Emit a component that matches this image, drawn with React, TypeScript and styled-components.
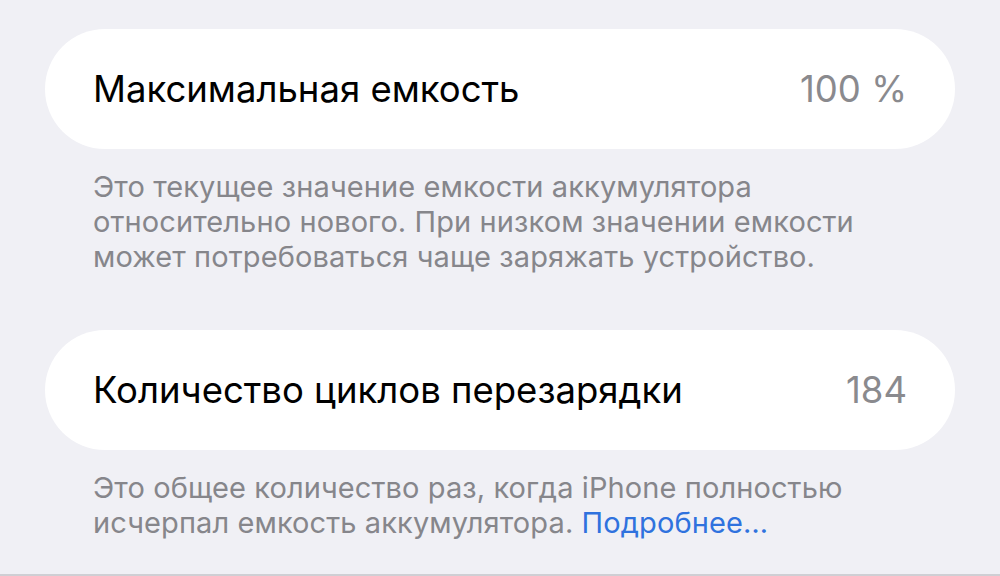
import React from 'react'
import styled, { createGlobalStyle } from 'styled-components'

const GlobalStyle = createGlobalStyle`
  html, body {
    margin: 0;
    padding: 0;
    background: #f0f0f5;
  }
  body {
    font-family: Inter, "Noto Sans", "Liberation Sans", sans-serif;
    -webkit-font-smoothing: antialiased;
  }
`

const Page = styled.div`
  width: 1000px;
  height: 576px;
  box-sizing: border-box;
  padding: 29px 45px 0;
  overflow: hidden;
  border-bottom: 2px solid #cfcfd4;
`

const Section = styled.section`
  margin-bottom: 56px;
`

const Card = styled.div`
  height: 120px;
  background: #ffffff;
  border-radius: 60px;
  display: flex;
  align-items: center;
  justify-content: space-between;
  padding: 0 48px;
  box-sizing: border-box;
`

const Title = styled.span`
  font-size: 36.5px;
  color: #000000;
`

const Value = styled.span`
  font-size: 36.5px;
  color: #8a8a8e;
`

const Footer = styled.p`
  margin: 0;
  padding: 20px 48px 0;
  font-size: 29px;
  letter-spacing: 0.1px;
  line-height: 35px;
  color: #86868b;
`

const Line = styled.span`
  display: block;
`

const Link = styled.a`
  color: #2f72de;
  text-decoration: none;
`

export default function App() {
  return (
    <>
      <GlobalStyle />
      <Page>
        <Section>
          <Card>
            <Title>Максимальная емкость</Title>
            <Value>100 %</Value>
          </Card>
          <Footer>
            <Line>Это текущее значение емкости аккумулятора</Line>
            <Line>относительно нового. При низком значении емкости</Line>
            <Line>может потребоваться чаще заряжать устройство.</Line>
          </Footer>
        </Section>
        <Section>
          <Card>
            <Title>Количество циклов перезарядки</Title>
            <Value>184</Value>
          </Card>
          <Footer>
            <Line>Это общее количество раз, когда iPhone полностью</Line>
            <Line>
              исчерпал емкость аккумулятора. <Link href="#">Подробнее…</Link>
            </Line>
          </Footer>
        </Section>
      </Page>
    </>
  )
}
